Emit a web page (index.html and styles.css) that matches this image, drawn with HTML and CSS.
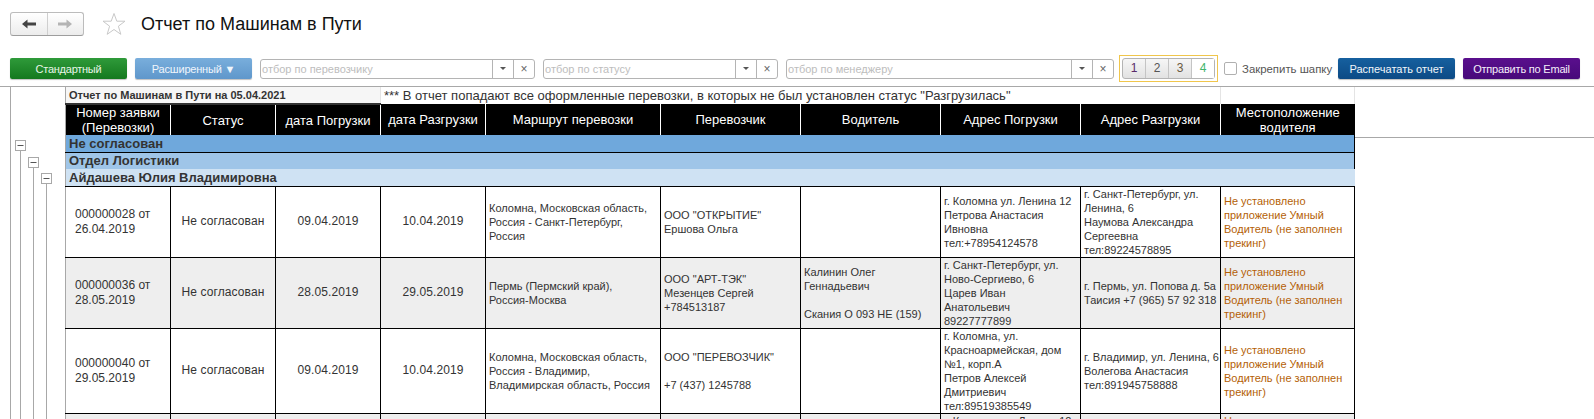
FILE: index.html
```html
<!DOCTYPE html>
<html lang="ru">
<head>
<meta charset="utf-8">
<title>Отчет по Машинам в Пути</title>
<link rel="stylesheet" href="styles.css">
</head>
<body>
<header class="titlebar">
  <div class="nav">
    <button class="nav-btn"><svg width="14" height="10" viewBox="0 0 14 10"><path d="M0 5 5.500 .5v3H14v3H5.500v3z" fill="#444"/></svg></button>
    <button class="nav-btn"><svg width="14" height="10" viewBox="0 0 14 10"><path d="M14 5 8.500 .5v3H0v3h8.500v3z" fill="#b4b4b4"/></svg></button>
  </div>
  <svg class="star" width="24" height="24" viewBox="0 0 24 24"><path d="M12 1.500 14.800 9.200H23L16.400 14.200 18.800 22.300 12 17.500 5.200 22.300 7.600 14.200 1 9.200H9.200z" fill="#fff" stroke="#c8c8c8"/></svg>
  <h1 class="title">Отчет по Машинам в Пути</h1>
</header>
<div class="filters">
  <button class="btn btn-green">Стандартный</button>
  <button class="btn btn-blue">Расширенный ▼</button>
  <div class="field field-a"><span class="ph">отбор по перевозчику</span><span class="fb"><i class="caret"></i></span><span class="fb">×</span></div>
  <div class="field field-b"><span class="ph">отбор по статусу</span><span class="fb"><i class="caret"></i></span><span class="fb">×</span></div>
  <div class="field field-c"><span class="ph">отбор по менеджеру</span><span class="fb"><i class="caret"></i></span><span class="fb">×</span></div>
  <div class="tumbler-wrap"><div class="tumbler"><span class="t1">1</span><span class="t2">2</span><span class="t3">3</span><span class="t4">4</span></div></div>
  <label class="check"><span class="box"></span>Закрепить шапку</label>
  <button class="btn btn-navy">Распечатать отчет</button>
  <button class="btn btn-purple">Отправить по Email</button>
</div>
<main class="report">
  <div class="tree">
    <svg width="55" height="333" viewBox="0 0 55 333">
      <g stroke="#a8a8a8" fill="none">
        <path d="M10.500 63V333M23.500 80V333M36.500 97V333"/>
        <rect x="5.500" y="53.500" width="10" height="10" fill="#fff"/>
        <rect x="18.500" y="70.500" width="10" height="10" fill="#fff"/>
        <rect x="31.500" y="86.500" width="10" height="10" fill="#fff"/>
        <path stroke="#555" d="M7.500 58.500h6M20.500 75.500h6M33.500 91.500h6"/>
      </g>
    </svg>
  </div>
  <table class="grid">
    <colgroup>
      <col class="c105"><col class="c105"><col class="c105"><col class="c105"><col class="c175"><col class="c140"><col class="c140"><col class="c140"><col class="c140"><col class="c134">
    </colgroup>
    <tr class="r-title">
      <td colspan="3" class="caption">Отчет по Машинам в Пути на 05.04.2021</td>
      <td colspan="6" class="note">*** В отчет попадают все оформленные перевозки, в которых не был установлен статус "Разгрузилась"</td>
      <td class="blank"></td>
    </tr>
    <tr class="r-head">
      <th>Номер заявки (Перевозки)</th><th>Статус</th><th>дата Погрузки</th><th>дата Разгрузки</th><th>Маршрут перевозки</th><th>Перевозчик</th><th>Водитель</th><th>Адрес Погрузки</th><th>Адрес Разгрузки</th><th>Местоположение водителя</th>
    </tr>
    <tr class="g g1"><td colspan="10">Не согласован</td></tr>
    <tr class="g g2"><td colspan="10">Отдел Логистики</td></tr>
    <tr class="g g3"><td colspan="10">Айдашева Юлия Владимировна</td></tr>
    <tr class="row h71">
      <td class="num">000000028 от 26.04.2019</td><td class="mid">Не согласован</td><td class="mid">09.04.2019</td><td class="mid">10.04.2019</td>
      <td>Коломна, Московская область, Россия - Санкт-Петербург, Россия</td>
      <td>ООО "ОТКРЫТИЕ"<br>Ершова Ольга</td>
      <td></td>
      <td>г. Коломна ул. Ленина 12<br>Петрова Анастасия Ивновна<br>тел:+78954124578</td>
      <td>г. Санкт-Петербург, ул. Ленина, 6<br>Наумова Александра Сергеевна<br>тел:89224578895</td>
      <td class="warn">Не установлено приложение Умный Водитель (не заполнен трекинг)</td>
    </tr>
    <tr class="row alt h71">
      <td class="num">000000036 от 28.05.2019</td><td class="mid">Не согласован</td><td class="mid">28.05.2019</td><td class="mid">29.05.2019</td>
      <td>Пермь (Пермский край),<br>Россия-Москва</td>
      <td>ООО "АРТ-ТЭК"<br>Мезенцев Сергей<br>+784513187</td>
      <td>Калинин Олег Геннадьевич<br><br>Скания О 093 НЕ (159)</td>
      <td>г. Санкт-Петербург, ул. Ново-Сергиево, 6<br>Царев Иван<br>Анатольевич<br>89227777899</td>
      <td>г. Пермь, ул. Попова д. 5а<br>Таисия +7 (965) 57 92 318</td>
      <td class="warn">Не установлено приложение Умный Водитель (не заполнен трекинг)</td>
    </tr>
    <tr class="row h85">
      <td class="num">000000040 от 29.05.2019</td><td class="mid">Не согласован</td><td class="mid">09.04.2019</td><td class="mid">10.04.2019</td>
      <td>Коломна, Московская область, Россия - Владимир, Владимирская область, Россия</td>
      <td>ООО "ПЕРЕВОЗЧИК"<br><br>+7 (437) 1245788</td>
      <td></td>
      <td>г. Коломна, ул. Красноармейская, дом №1, корп.А<br>Петров Алексей Дмитриевич<br>тел:89519385549</td>
      <td>г. Владимир, ул. Ленина, 6<br>Волегова Анастасия<br>тел:891945758888</td>
      <td class="warn">Не установлено приложение Умный Водитель (не заполнен трекинг)</td>
    </tr>
    <tr class="row alt top">
      <td></td><td></td><td></td><td></td><td></td><td></td><td></td>
      <td class="center">г. Коломна ул. Ленина 12</td><td></td>
      <td class="warn">Не установлено</td>
    </tr>
  </table>
  <div class="side"></div>
</main>
</body>
</html>
```
FILE: styles.css
```css
* { box-sizing: border-box; }
html, body { margin: 0; height: 419px; overflow: hidden; background: #fff; }
body { font-family: "Liberation Sans", Arial, sans-serif; color: #333; }
button { font-family: inherit; }

.titlebar { display: flex; align-items: center; height: 48px; padding: 0 0 0 10px; }
.nav { display: flex; width: 74px; height: 24px; border: 1px solid #bcbcbc; border-bottom-color: #9d9d9d; border-radius: 3px; background: linear-gradient(#fff, #ececec); }
.nav-btn { flex: 1; display: flex; align-items: center; justify-content: center; border: 0; padding: 0; background: none; }
.nav-btn + .nav-btn { border-left: 1px solid #cfcfcf; }
.star { margin-left: 18px; flex: none; }
.title { margin: 0 0 0 15px; font-size: 18px; font-weight: 400; color: #111; }

.filters { display: flex; align-items: center; height: 27px; margin-top: 7px; padding-left: 10px; }
.btn { width: 117px; height: 21px; border: 0; border-radius: 2px; padding: 0; font-size: 11px; text-align: center; box-shadow: 0 1px 1px rgba(0,0,0,.25); }
.btn-green { background: linear-gradient(#2f9a3a, #14791e); color: #e8f5e8; letter-spacing: -.25px; }
.btn-blue { margin-left: 8px; background: linear-gradient(#79aedc, #5f97cb); color: #f0f6fc; letter-spacing: -.2px; }
.btn-navy { margin-left: 9px; background: linear-gradient(#16609f, #0c4a85); color: #f2f6fa; }
.btn-purple { margin-left: 8px; background: linear-gradient(#5a0f8d, #470a7a); color: #f5eefa; letter-spacing: -.2px; }

.field { display: flex; height: 20px; margin-left: 8px; border: 1px solid #b4b4b4; border-radius: 3px; background: #fff; font-size: 11px; color: #bdbdbd; }
.field-a { width: 275px; }
.field-b { width: 235px; }
.field-c { width: 328px; }
.ph { flex: 1; padding-left: 1px; line-height: 18px; }
.fb { width: 21px; display: flex; align-items: center; justify-content: center; border-left: 1px solid #b4b4b4; font-size: 12px; color: #666; }
.caret { width: 0; height: 0; border: 3px solid transparent; border-top: 3px solid #555; border-bottom: 0; }

.tumbler-wrap { width: 99px; height: 27px; margin-left: 5px; padding: 2px 2px; border: 1px solid #f0c64c; }
.tumbler { display: flex; height: 21px; border: 1px solid #b4b4b4; border-radius: 3px; font-size: 12px; line-height: 19px; text-align: center; background: linear-gradient(#f6f6f6, #e2e2e2); }
.tumbler span { flex: 1; }
.tumbler span + span { border-left: 1px solid #c4c4c4; }
.t1 { color: #5a2a6a; }
.t2 { color: #555; }
.t3 { color: #6a5a40; }
.tumbler .t4 { color: #3fb56b; background: #fff; }

.check { display: flex; align-items: center; margin-left: 6px; font-size: 11.400px; color: #555; width: 105px; white-space: nowrap; }
.box { flex: none; width: 13px; height: 13px; margin-right: 5px; border: 1px solid #b0b0b0; border-radius: 2px; background: #fff; }

.report { display: flex; align-items: flex-start; margin-top: 4px; height: 333px; overflow: hidden; border-top: 1px solid #a8a8a8; }
.tree { flex: none; width: 55px; height: 333px; margin-left: 10px; border-left: 1px solid #a8a8a8; }
.tree svg { display: block; margin-left: -1px; }
.side { flex: 1; height: 51px; border-bottom: 1px solid #a8a8a8; }

.grid { flex: none; width: 1290px; table-layout: fixed; border-collapse: collapse; font-size: 11px; line-height: 14px; }
.c105 { width: 105px; }
.c175 { width: 175px; }
.c140 { width: 140px; }
.c134 { width: 134px; }
.grid td, .grid th { padding: 0 1px 0 3px; }
.grid tr > :first-child { border-left: 1px solid #a8a8a8; }

.r-title td { height: 17px; background: #f6f6f6; white-space: nowrap; }
.caption { font-weight: 700; color: #333; }
.note { font-size: 13px; color: #333; background: #fff !important; border-left: 1px solid #e4e4e4; }
.blank { background: #fff !important; border-left: 1px solid #e4e4e4; border-right: 1px solid #e4e4e4; }
.grid .r-head th { height: 31px; background: #000; color: #fff; font-size: 13px; font-weight: 400; line-height: 15px; border-left: 1px solid #fff; padding: 0 4px; }
.grid .r-head th:nth-child(-n+3) { border-top: 2px solid #333; }
.grid .r-head th:first-child { border-left-color: #a8a8a8; }

.grid .g td { height: 17px; padding-top: 1px; font-size: 13px; font-weight: 700; color: #333; }
.g1 td, .g2 td { border-right: 1px solid #000; }
.g1 td { background: #6fa8dc; border-bottom: 1px solid #000; }
.g2 td { background: #9fc5e8; }
.g3 td { background: #cfe2f3; border-bottom: 1px solid #000; }

.row td { border: 1px solid #000; color: #333; vertical-align: middle; }
.h71 { height: 71px; }
.h85 { height: 85px; }
.alt td { background: #eee; }
.top td { height: 14px; vertical-align: top; }
.num, .mid { font-size: 12px; line-height: 15px; }
.grid .row .num { padding: 0 9px; }
.grid .row .mid { padding: 0 1px; text-align: center; letter-spacing: .1px; }
.row .warn { color: #b45f06; }
.center { white-space: nowrap; }
```
